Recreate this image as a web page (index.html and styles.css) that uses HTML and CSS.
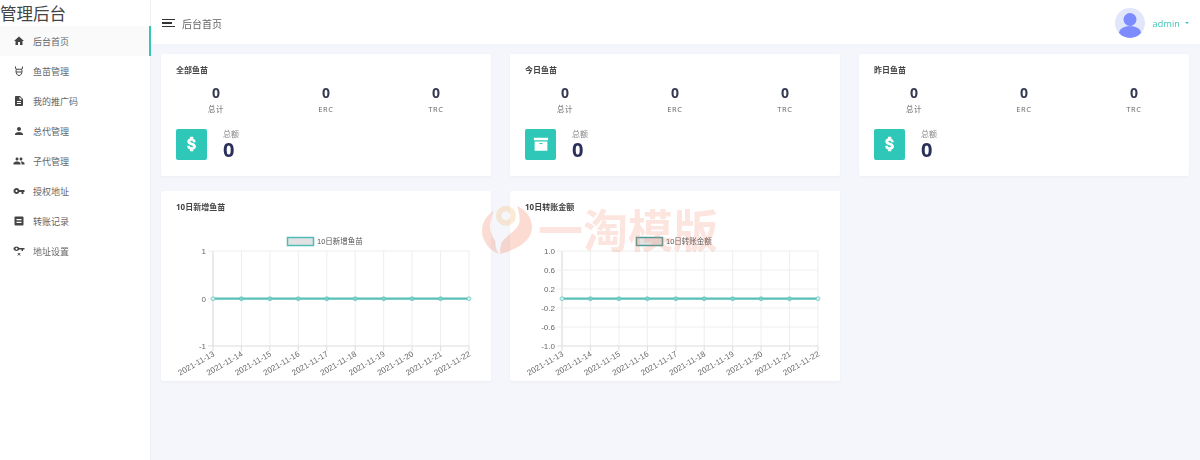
FILE: index.html
```html
<!DOCTYPE html>
<html lang="zh-CN">
<head>
<meta charset="utf-8">
<title>管理后台</title>
<link rel="stylesheet" href="styles.css">
</head>
<body>
<svg class="defs" width="0" height="0" aria-hidden="true">
  <defs>
    <g id="chart-grid">
      <path class="grid" d="M52 30V125M80.400 30V125M108.900 30V125M137.300 30V125M165.800 30V125M194.200 30V125M222.700 30V125M251.100 30V125M279.600 30V125M308 30V125"/>
      <path class="axis" d="M52 125V130M80.400 125V130M108.900 125V130M137.300 125V130M165.800 125V130M194.200 125V130M222.700 125V130M251.100 125V130M279.600 125V130M308 125V130"/>
      <path class="axis" d="M52 30V125M47 125H308"/>
      <path class="grid" d="M47 30H308"/>
    </g>
    <g id="chart-line">
      <path class="line" d="M52 77.700H308"/>
      <g class="dots">
        <circle class="dot-end" cx="52" cy="77.700" r="2"/><circle cx="80.400" cy="77.700" r="2"/><circle cx="108.900" cy="77.700" r="2"/><circle cx="137.300" cy="77.700" r="2"/><circle cx="165.800" cy="77.700" r="2"/><circle cx="194.200" cy="77.700" r="2"/><circle cx="222.700" cy="77.700" r="2"/><circle cx="251.100" cy="77.700" r="2"/><circle cx="279.600" cy="77.700" r="2"/><circle class="dot-end" cx="308" cy="77.700" r="2"/>
      </g>
    </g>
    <g id="chart-dates" class="tick">
      <text text-anchor="end" transform="translate(54 134.500) rotate(-30)">2021-11-13</text>
      <text text-anchor="end" transform="translate(82.400 134.500) rotate(-30)">2021-11-14</text>
      <text text-anchor="end" transform="translate(110.900 134.500) rotate(-30)">2021-11-15</text>
      <text text-anchor="end" transform="translate(139.300 134.500) rotate(-30)">2021-11-16</text>
      <text text-anchor="end" transform="translate(167.800 134.500) rotate(-30)">2021-11-17</text>
      <text text-anchor="end" transform="translate(196.200 134.500) rotate(-30)">2021-11-18</text>
      <text text-anchor="end" transform="translate(224.700 134.500) rotate(-30)">2021-11-19</text>
      <text text-anchor="end" transform="translate(253.100 134.500) rotate(-30)">2021-11-20</text>
      <text text-anchor="end" transform="translate(281.600 134.500) rotate(-30)">2021-11-21</text>
      <text text-anchor="end" transform="translate(310 134.500) rotate(-30)">2021-11-22</text>
    </g>
    <symbol id="i-dollar" viewBox="0 0 24 24"><path d="M11.800 10.900c-2.270-.59-3-1.200-3-2.150 0-1.090 1.010-1.850 2.700-1.850 1.780 0 2.440.85 2.500 2.100h2.210c-.07-1.720-1.120-3.300-3.210-3.810V3h-3v2.160c-1.940.42-3.500 1.680-3.500 3.610 0 2.310 1.910 3.460 4.700 4.130 2.500.6 3 1.480 3 2.410 0 .69-.49 1.790-2.700 1.790-2.060 0-2.870-.92-2.980-2.100h-2.200c.12 2.190 1.760 3.420 3.680 3.830V21h3v-2.150c1.950-.37 3.500-1.500 3.500-3.550 0-2.840-2.430-3.810-4.700-4.400z" stroke="#fff" stroke-width="1.400"/></symbol>
    <symbol id="i-box" viewBox="0 0 24 24"><path d="M2.500 3.500h19v3.500h-19zM3.500 8.500h17V21h-17zm6.500 2v1.400h4v-1.400z" fill-rule="evenodd"/></symbol>
  </defs>
</svg>

<div class="app">
  <aside class="sidebar">
    <div class="brand">管理后台</div>
    <nav class="nav">
      <a class="nav-item active"><svg class="nav-icon" viewBox="0 0 24 24"><path d="M10 20v-6h4v6h5v-8h3L12 3 2 12h3v8z"/></svg>后台首页</a>
      <a class="nav-item"><svg class="nav-icon outline" viewBox="0 0 24 24"><path d="M5 3v3c0 1.500 1 2.500 2.500 2.500h9C18 8.500 19 7.500 19 6V3M7 8.500c-.8 1.200-1 2.300-1 3.500 0 5 2.500 9 6 9s6-4 6-9c0-1.200-.2-2.300-1-3.500M6.500 14h11"/></svg>鱼苗管理</a>
      <a class="nav-item"><svg class="nav-icon" viewBox="0 0 24 24"><path d="M14 2H6c-1.100 0-1.990.9-1.990 2L4 20c0 1.100.89 2 1.990 2H18c1.100 0 2-.9 2-2V8l-6-6zm2 16H8v-2h8v2zm0-4H8v-2h8v2zm-3-5V3.500L18.500 9H13z"/></svg>我的推广码</a>
      <a class="nav-item"><svg class="nav-icon" viewBox="0 0 24 24"><path d="M12 12c2.210 0 4-1.790 4-4s-1.790-4-4-4-4 1.790-4 4 1.790 4 4 4zm0 2c-2.670 0-8 1.340-8 4v2h16v-2c0-2.660-5.330-4-8-4z"/></svg>总代管理</a>
      <a class="nav-item"><svg class="nav-icon" viewBox="0 0 24 24"><path d="M16 11c1.660 0 2.990-1.340 2.990-3S17.660 5 16 5c-1.660 0-3 1.340-3 3s1.340 3 3 3zm-8 0c1.660 0 2.990-1.340 2.990-3S9.660 5 8 5C6.340 5 5 6.340 5 8s1.340 3 3 3zm0 2c-2.330 0-7 1.170-7 3.500V19h14v-2.500c0-2.330-4.670-3.500-7-3.500zm8 0c-.29 0-.62.02-.97.05 1.160.84 1.970 1.970 1.970 3.450V19h6v-2.500c0-2.330-4.670-3.500-7-3.500z"/></svg>子代管理</a>
      <a class="nav-item"><svg class="nav-icon" viewBox="0 0 24 24"><path d="M12.650 10C11.830 7.670 9.610 6 7 6c-3.310 0-6 2.690-6 6s2.690 6 6 6c2.610 0 4.830-1.670 5.650-4H17v4h4v-4h2v-4H12.650zM7 14c-1.100 0-2-.9-2-2s.9-2 2-2 2 .9 2 2-.9 2-2 2z"/></svg>授权地址</a>
      <a class="nav-item"><svg class="nav-icon" viewBox="0 0 24 24"><path fill-rule="evenodd" d="M5 3h14a2 2 0 0 1 2 2v14a2 2 0 0 1-2 2H5a2 2 0 0 1-2-2V5a2 2 0 0 1 2-2zm2 5v2.500h10V8zm0 5.500V16h10v-2.500z"/></svg>转账记录</a>
      <a class="nav-item"><svg class="nav-icon" viewBox="0 0 24 24"><path d="M12.650 6C11.830 4.500 9.610 3 7 3 3.690 3 1 5 1 7.500S3.690 12 7 12c2.610 0 4.830-1.500 5.650-3H17v3h3V9h3V6H12.650zM7 9.500c-1.100 0-2-.9-2-2s.9-2 2-2 2 .9 2 2-.9 2-2 2z"/><path class="cross" d="M9.500 16l5 5M14.500 16l-5 5"/></svg>地址设置</a>
    </nav>
  </aside>

  <div class="main">
    <header class="topbar">
      <div class="crumb">
        <span class="burger"><i></i><i class="short"></i><i></i></span>
        <span class="crumb-text">后台首页</span>
      </div>
      <div class="user">
        <span class="avatar"><svg viewBox="0 0 30 30"><circle cx="15" cy="11.500" r="6.500"/><ellipse cx="15" cy="24.500" rx="11" ry="6.500"/></svg></span>
        <span class="user-name">admin</span>
        <span class="caret"></span>
      </div>
    </header>

    <section class="content">
      <div class="row">
        <article class="card stat">
          <h3 class="card-title">全部鱼苗</h3>
          <div class="metrics">
            <div class="metric"><b>0</b><span>总计</span></div>
            <div class="metric"><b>0</b><span>ERC</span></div>
            <div class="metric"><b>0</b><span>TRC</span></div>
          </div>
          <div class="total">
            <span class="total-icon"><svg viewBox="0 0 24 24"><use href="#i-dollar"/></svg></span>
            <div class="total-body"><span>总额</span><b>0</b></div>
          </div>
        </article>
        <article class="card stat">
          <h3 class="card-title">今日鱼苗</h3>
          <div class="metrics">
            <div class="metric"><b>0</b><span>总计</span></div>
            <div class="metric"><b>0</b><span>ERC</span></div>
            <div class="metric"><b>0</b><span>TRC</span></div>
          </div>
          <div class="total">
            <span class="total-icon"><svg viewBox="0 0 24 24"><use href="#i-box"/></svg></span>
            <div class="total-body"><span>总额</span><b>0</b></div>
          </div>
        </article>
        <article class="card stat">
          <h3 class="card-title">昨日鱼苗</h3>
          <div class="metrics">
            <div class="metric"><b>0</b><span>总计</span></div>
            <div class="metric"><b>0</b><span>ERC</span></div>
            <div class="metric"><b>0</b><span>TRC</span></div>
          </div>
          <div class="total">
            <span class="total-icon"><svg viewBox="0 0 24 24"><use href="#i-dollar"/></svg></span>
            <div class="total-body"><span>总额</span><b>0</b></div>
          </div>
        </article>
      </div>

      <div class="row">
        <article class="card chart-card">
          <h3 class="card-title">10日新增鱼苗</h3>
          <svg class="chart" viewBox="0 0 330 160">
            <rect class="legend-box" x="126.500" y="16.500" width="26" height="8"/>
            <text class="legend" x="156" y="23">10日新增鱼苗</text>
            <use href="#chart-grid"/>
            <path class="grid" d="M47 77.700H52"/>
            <g class="tick" text-anchor="end">
              <text x="45" y="33">1</text>
              <text x="45" y="80.700">0</text>
              <text x="45" y="128">-1</text>
            </g>
            <use href="#chart-line"/>
            <use href="#chart-dates"/>
          </svg>
        </article>
        <article class="card chart-card">
          <h3 class="card-title">10日转账金额</h3>
          <svg class="chart" viewBox="0 0 330 160">
            <rect class="legend-box dark" x="126.500" y="16.500" width="26" height="8"/>
            <text class="legend" x="156" y="23">10日转账金额</text>
            <use href="#chart-grid"/>
            <path class="grid" d="M47 49H308M47 68H308M47 87H308M47 106H308"/>
            <g class="tick" text-anchor="end">
              <text x="45" y="33">1.0</text>
              <text x="45" y="52">0.6</text>
              <text x="45" y="71">0.2</text>
              <text x="45" y="90">-0.2</text>
              <text x="45" y="109">-0.6</text>
              <text x="45" y="128">-1.0</text>
            </g>
            <use href="#chart-line"/>
            <use href="#chart-dates"/>
          </svg>
        </article>
      </div>
    </section>
  </div>

  <div class="watermark">
    <svg class="watermark-logo" viewBox="0 0 50 50">
      <path class="wm-a" d="M11.700 6.700C4 12 0 19 0 26.700 0 37 7 46 16.700 50c-2.500-4-3.400-8.500-3.400-13.300C10 33 8.300 28 8.300 23c0-6 1.500-11.500 3.400-16.300z"/>
      <path class="wm-b" fill-rule="evenodd" d="M24 1.700a10 10 0 1 1 0 20 10 10 0 0 1 0-20zm0 5.500a4.500 4.500 0 1 0 0 9 4.500 4.500 0 0 0 0-9z"/>
      <path class="wm-c" d="M35 1.700C44 6 50 14 50 23.300 50 31 45 37.500 38 41.700 32 45.500 25 48 18.300 50c-.5-4 0-8.500 1.700-12 3-4.500 7.500-7.500 11.700-11.300 3.500-3 6-6.500 6-10 0-5-1-10.500-2.700-15z"/>
    </svg>
    <span class="watermark-text">一淘模版</span>
  </div>
</div>
</body>
</html>
```

FILE: styles.css
```css
* { box-sizing: border-box; }

html, body {
  margin: 0;
  height: 460px;
  overflow: hidden;
}

body {
  font-family: "Open Sans", "Noto Sans CJK SC", sans-serif;
  color: #555;
  background: #f4f6fb;
}

.defs { position: absolute; }

.app {
  position: relative;
  display: flex;
  height: 460px;
  filter: blur(.3px);
}

/* Sidebar */
.sidebar {
  flex: 0 0 151px;
  background: #fff;
  border-right: 1px solid #eceef3;
}

.brand {
  height: 26px;
  font-size: 16.500px;
  line-height: 28px;
  color: #444;
  white-space: nowrap;
}

.nav { display: flex; flex-direction: column; }

.nav-item {
  display: flex;
  align-items: center;
  gap: 8px;
  height: 30px;
  padding-left: 13px;
  font-size: 9px;
  color: #666;
}

.nav-item.active {
  background: #fafafa;
  border-right: 2px solid #37c5b4;
  margin-right: -1px;
}

.nav-icon {
  width: 12px;
  height: 12px;
  fill: #444;
}

.nav-icon.outline {
  fill: none;
  stroke: #444;
  stroke-width: 2;
}

.nav-icon .cross {
  fill: none;
  stroke: #444;
  stroke-width: 2;
}

/* Topbar */
.main {
  flex: 1;
  display: flex;
  flex-direction: column;
  min-width: 0;
}

.topbar {
  flex: 0 0 44px;
  display: flex;
  align-items: center;
  justify-content: space-between;
  padding: 2px 11px 0 11px;
  background: #fff;
}

.crumb {
  display: flex;
  align-items: center;
  gap: 7px;
}

.burger {
  display: flex;
  flex-direction: column;
  gap: 2px;
  width: 13px;
}

.burger i {
  display: block;
  height: 1.500px;
  background: #333;
}

.burger i.short { width: 10px; }

.crumb-text {
  font-size: 10px;
  color: #666;
}

.user {
  display: flex;
  align-items: center;
}

.avatar {
  width: 30px;
  height: 30px;
  margin-right: 8px;
  border-radius: 50%;
  background: #e1e6fb;
  overflow: hidden;
}

.avatar svg {
  display: block;
  fill: #7d8bff;
}

.user-name {
  font-size: 9px;
  letter-spacing: .15px;
  color: #3cc6b4;
}

.caret {
  width: 0;
  height: 0;
  margin-left: 5px;
  border: 2.500px solid transparent;
  border-top-color: #3cc6b4;
  border-bottom-width: 0;
}

/* Content */
.content {
  flex: 1;
  display: flex;
  flex-direction: column;
  gap: 15px;
  padding: 10px 0 0 10px;
}

.row {
  display: flex;
  gap: 19px;
}

.card {
  flex: 0 0 330px;
  background: #fff;
  border-radius: 2px;
  box-shadow: 0 1px 3px rgba(90, 100, 140, .05);
}

.card-title {
  margin: 0;
  font-size: 8px;
  line-height: 12px;
  font-weight: 700;
  color: #444;
}

.stat {
  height: 122px;
  padding: 10px 0 0;
}

.stat .card-title { padding-left: 15px; }

.metrics {
  display: grid;
  grid-template-columns: repeat(3, 110px);
  margin-top: 7px;
}

.metric {
  display: flex;
  flex-direction: column;
  align-items: center;
}

.metric b {
  font-size: 14px;
  line-height: 20px;
  font-weight: 700;
  color: #353a52;
}

.metric span {
  font-size: 7.500px;
  line-height: 12px;
  letter-spacing: .6px;
  color: #666;
}

.total {
  display: flex;
  align-items: center;
  gap: 16px;
  margin-top: 13px;
  padding-left: 15px;
}

.total-icon {
  display: flex;
  align-items: center;
  justify-content: center;
  width: 31px;
  height: 31px;
  border-radius: 2px;
  background: #2fc8b8;
}

.total-icon svg {
  width: 18px;
  height: 18px;
  fill: #fff;
}

.total-body {
  display: flex;
  flex-direction: column;
}

.total-body span {
  font-size: 8px;
  line-height: 11px;
  color: #888;
}

.total-body b {
  font-size: 20px;
  line-height: 21px;
  font-weight: 700;
  color: #2b2f5b;
}

.chart-card {
  height: 190px;
  padding-top: 10px;
}

.chart-card .card-title { padding-left: 15px; }

.chart {
  display: block;
  width: 330px;
  height: 160px;
  margin-top: 8px;
}

.grid {
  fill: none;
  stroke: #eeeeee;
  stroke-width: 1;
}

.axis {
  fill: none;
  stroke: #dddddd;
  stroke-width: 1;
}

.line {
  fill: none;
  stroke: #58bfb9;
  stroke-width: 2.200;
}

.dots circle {
  fill: #7fcfca;
  stroke: #58bfb9;
  stroke-width: .6;
}

.dots .dot-end { fill: #cdeeea; }

.tick text, .tick {
  font-family: "Liberation Sans", sans-serif;
  font-size: 8px;
  fill: #666;
}

.legend {
  font-family: "Liberation Sans", "Noto Sans CJK SC", sans-serif;
  font-size: 7.500px;
  fill: #555;
}

.legend-box {
  fill: #e2e2e2;
  stroke: #4fbdb7;
  stroke-width: 1.500;
}

.legend-box.dark { stroke: #4f9c98; }

/* Watermark lies over the page */
.watermark {
  position: absolute;
  left: 482px;
  top: 204px;
  display: flex;
  align-items: center;
  gap: 6px;
  pointer-events: none;
}

.watermark-logo {
  width: 50px;
  height: 50px;
}

.wm-a { fill: rgba(240, 130, 100, .28); }
.wm-b { fill: rgba(245, 190, 120, .32); }
.wm-c { fill: rgba(240, 125, 95, .28); }

.watermark-text {
  font-family: "Noto Sans CJK SC", sans-serif;
  font-size: 45px;
  line-height: 50px;
  font-weight: 700;
  color: rgba(240, 130, 110, .22);
  white-space: nowrap;
}
```
